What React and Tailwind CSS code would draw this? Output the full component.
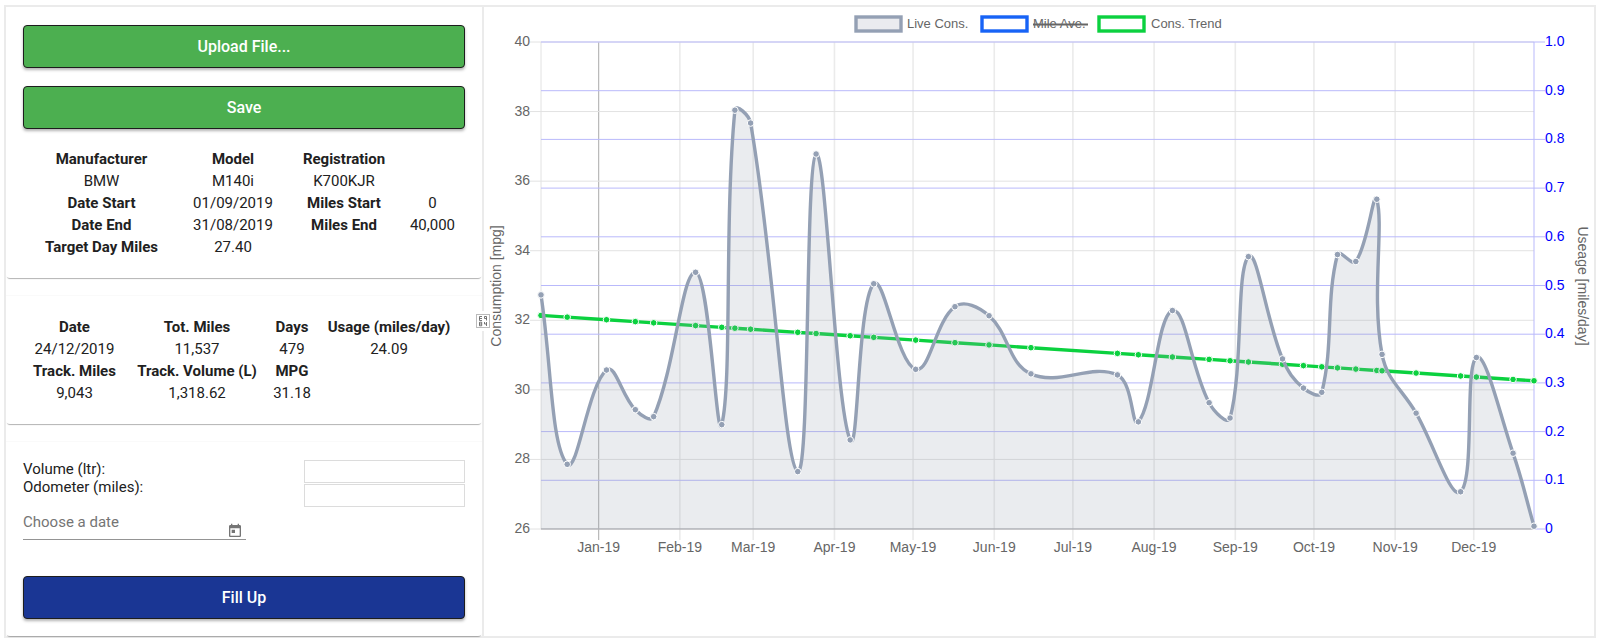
const fills = [
  [0, 32.73], [10, 27.86], [25, 30.57], [36, 29.43], [43, 29.23], [59, 33.38],
  [69, 29.0], [74, 38.04], [80, 37.67], [98, 27.65], [105, 36.78], [118, 28.56],
  [127, 33.05], [143, 30.59], [158, 32.39], [171, 32.13], [187, 30.46], [220, 30.43],
  [228, 29.08], [241, 32.28], [255, 29.63], [263, 29.19], [270, 33.83], [283, 30.89],
  [291, 30.05], [298, 29.93], [304, 33.89], [311, 33.69], [319, 35.48], [321, 31.02],
  [334, 29.33], [351, 27.07], [357, 30.93], [371, 28.18], [379, 26.08],
]

const months = [
  ['Jan-19', 22], ['Feb-19', 53], ['Mar-19', 81], ['Apr-19', 112], ['May-19', 142], ['Jun-19', 173],
  ['Jul-19', 203], ['Aug-19', 234], ['Sep-19', 265], ['Oct-19', 295], ['Nov-19', 326], ['Dec-19', 356],
]

const LEFT = 57
const RIGHT = 1050
const TOP = 35
const BOTTOM = 522
const DAYS = 379

const xFor = (day) => LEFT + (day / DAYS) * (RIGHT - LEFT)
const yFor = (mpg) => BOTTOM - ((mpg - 26) / 14) * (BOTTOM - TOP)
const clampY = (y) => Math.min(BOTTOM, Math.max(TOP, y))

const points = fills.map(([day, mpg]) => ({ x: xFor(day), y: yFor(mpg) }))
const trend = fills.map(([day]) => ({ x: xFor(day), y: yFor(32.14 - (day / DAYS) * 1.88) }))

// tension 0.4 spline, control points weighted by the distance to each neighbour
function spline(pts) {
  const controls = pts.map((p, i) => {
    const prev = pts[i - 1] || p
    const next = pts[i + 1] || p
    const d01 = Math.hypot(p.x - prev.x, p.y - prev.y)
    const d12 = Math.hypot(next.x - p.x, next.y - p.y)
    const fa = (0.4 * d01) / (d01 + d12)
    const fb = (0.4 * d12) / (d01 + d12)
    const dx = next.x - prev.x
    const dy = next.y - prev.y
    return {
      before: [p.x - fa * dx, clampY(p.y - fa * dy)],
      after: [p.x + fb * dx, clampY(p.y + fb * dy)],
    }
  })
  return pts
    .map((p, i) => (i === 0 ? `M${p.x},${p.y}` : `C${controls[i - 1].after} ${controls[i].before} ${p.x},${p.y}`))
    .join(' ')
}

const line = spline(points)
const area = `${line} L${RIGHT},${BOTTOM} L${LEFT},${BOTTOM} Z`
const trendLine = `M${trend.map((p) => `${p.x},${p.y}`).join(' L')}`

function Chart() {
  return (
    <svg viewBox="0 0 1110 560" className="block w-full font-['Liberation_Sans',Arial,sans-serif] text-[14px]" role="img" aria-label="Fuel consumption">
      <g strokeWidth="3.4" className="text-[13px]">
        <rect x="372" y="10" width="45" height="14" fill="#eaebef" stroke="#94a0b4" />
        <rect x="498" y="10" width="45" height="14" fill="#fff" stroke="#1763f6" />
        <rect x="615" y="10" width="45" height="14" fill="#fff" stroke="#0bd13f" />
        <g fill="#666" stroke="none">
          <text x="423" y="21">Live Cons.</text>
          <text x="549" y="21">Mile Ave.</text>
          <text x="667" y="21">Cons. Trend</text>
        </g>
        <path d="M549 17.5H604" stroke="#666" strokeWidth="2" />
      </g>

      <g fill="#666" textAnchor="middle">
        {months.map(([label, day]) => (
          <g key={label}>
            <path d={`M${xFor(day)} ${TOP}V${BOTTOM + 11}`} stroke={day === 22 ? '#b8b8b8' : '#ebebeb'} strokeWidth={day === 22 ? 1.2 : 1.6} />
            <text x={xFor(day)} y="545">{label}</text>
          </g>
        ))}
      </g>
      <path d={`M${LEFT} ${TOP}V${BOTTOM}`} stroke="#e2e2e2" />

      <g fill="#666" textAnchor="end">
        {[40, 38, 36, 34, 32, 30, 28, 26].map((mpg) => (
          <g key={mpg}>
            <path d={`M${LEFT - 11} ${yFor(mpg)}H${mpg === 26 ? LEFT : RIGHT}`} stroke="#e2e2e2" />
            <text x={LEFT - 11} y={yFor(mpg) + 4}>{mpg}</text>
          </g>
        ))}
      </g>

      <g fill="#00f">
        {[0, 1, 2, 3, 4, 5, 6, 7, 8, 9, 10].map((n) => {
          const y = BOTTOM - (n / 10) * (BOTTOM - TOP)
          return (
            <g key={n}>
              <path d={`M${n === 0 ? RIGHT : LEFT} ${y}H${RIGHT + 11}`} stroke="#b9b9fb" />
              <text x={RIGHT + 11} y={y + 4}>{n === 0 ? '0' : (n / 10).toFixed(1)}</text>
            </g>
          )
        })}
        <path d={`M${RIGHT} ${TOP}V${BOTTOM}`} stroke="#b9b9fb" />
      </g>

      <path d={`M${LEFT} ${BOTTOM}H${RIGHT}`} stroke="#b4b4b8" strokeWidth="1.5" />

      <path d={trendLine} fill="none" stroke="#0bd13f" strokeWidth="3.4" />
      {trend.map((p, i) => (
        <circle key={i} cx={p.x} cy={p.y} r="3.3" fill="#0bd13f" stroke="#fff" />
      ))}
      <path d={area} fill="#949fb1" fillOpacity="0.2" />
      <path d={line} fill="none" stroke="#94a0b4" strokeWidth="3.4" strokeLinejoin="round" />
      {points.map((p, i) => (
        <circle key={i} cx={p.x} cy={p.y} r="3.3" fill="#94a0b4" stroke="#fff" />
      ))}

      <g fill="#666" textAnchor="middle">
        <text transform="translate(17 279) rotate(-90)">Consumption [mpg]</text>
        <text transform="translate(1094 279) rotate(90)">Useage [miles/day]</text>
      </g>
    </svg>
  )
}

function Card({ className, children }) {
  return (
    <section className={`rounded-b-[4px] px-[17px] shadow-[0_2px_1px_-1px_rgba(0,0,0,0.3)] ${className}`}>{children}</section>
  )
}

function BigButton({ className, children }) {
  return (
    <button
      type="button"
      className={`block h-[43px] w-full rounded-[4px] border border-[#1d1d1d] text-base font-medium text-white shadow-[0_2px_3px_rgba(0,0,0,0.3)] ${className}`}
    >
      {children}
    </button>
  )
}

function SplitHandle() {
  return (
    <div className="absolute top-[304px] -right-2 bg-white py-[3px]" role="separator" aria-orientation="vertical">
      <svg viewBox="0 0 14 14" className="h-[14px] w-[14px]" fill="none" stroke="#555">
        <rect x="0.5" y="0.5" width="13" height="13" stroke="#bbb" />
        <path d="M6 2.5H3.5V6.5H6M3.5 4.5H6M10.5 6.5V2.5H8.5V4.5H10.5M3.5 8.2H5.7V11.8H3.5ZM3.5 10H5.7M8.5 8V10H10.5M10.5 8V12" strokeWidth="0.8" />
      </svg>
    </div>
  )
}

export default function App() {
  return (
    <main className="px-1 pt-[5px] pb-1 font-[Roboto,sans-serif] text-[15px] text-[#212121]">
      <div className="flex border-2 border-[#ebebeb]">
        <div className="relative w-[478px] shrink-0 border-r-2 border-[#ebebeb]">
          <Card className="pt-[18px] pb-5">
            <BigButton className="bg-[#4caf50]">Upload File...</BigButton>
            <BigButton className="mt-[18px] bg-[#4caf50]">Save</BigButton>
            <table className="mt-[19px] ml-[5px] w-[440px] table-fixed text-center leading-[22px]">
              <tbody>
                <tr>
                  <th className="w-[147px]">Manufacturer</th>
                  <th className="w-[116px]">Model</th>
                  <th className="w-[106px]">Registration</th>
                  <td />
                </tr>
                <tr><td>BMW</td><td>M140i</td><td>K700KJR</td><td /></tr>
                <tr><th>Date Start</th><td>01/09/2019</td><th>Miles Start</th><td>0</td></tr>
                <tr><th>Date End</th><td>31/08/2019</td><th>Miles End</th><td>40,000</td></tr>
                <tr><th>Target Day Miles</th><td>27.40</td><td /><td /></tr>
              </tbody>
            </table>
          </Card>

          <Card className="mt-[17px] border-t border-[#fafafa] pt-5 pb-5">
            <table className="text-center leading-[22px]">
              <tbody>
                <tr>
                  <th className="w-[103px]">Date</th>
                  <th className="w-[142px]">Tot. Miles</th>
                  <th className="w-[48px]">Days</th>
                  <th className="w-[146px]">Usage (miles/day)</th>
                </tr>
                <tr><td>24/12/2019</td><td>11,537</td><td>479</td><td>24.09</td></tr>
                <tr><th>Track. Miles</th><th>Track. Volume (L)</th><th>MPG</th><td /></tr>
                <tr><td>9,043</td><td>1,318.62</td><td>31.18</td><td /></tr>
              </tbody>
            </table>
          </Card>

          <Card className="mt-[17px] border-t border-[#fafafa] pt-[18px] pb-[17px]">
            <div className="flex justify-between">
              <div className="flex flex-col leading-[18px]">
                <label htmlFor="volume">Volume (ltr):</label>
                <label htmlFor="odometer">Odometer (miles):</label>
              </div>
              <div className="flex w-[161px] flex-col gap-px">
                <input id="volume" className="h-[23px] border border-[#dcdcdc] px-1" />
                <input id="odometer" className="h-[23px] border border-[#dcdcdc] px-1" />
              </div>
            </div>
            <div className="mt-1 flex h-[29px] w-[223px] items-start border-b border-[#949494]">
              <input aria-label="Choose a date" placeholder="Choose a date" className="min-w-0 flex-1 leading-[22px] outline-none placeholder:text-[#757575]" />
              <button type="button" aria-label="Open calendar" className="mt-3 mr-[3px]">
                <svg viewBox="0 0 24 24" className="h-4 w-4" fill="#757575">
                  <path d="M19 3h-1V1h-2v2H8V1H6v2H5c-1.11 0-1.99.9-1.99 2L3 19c0 1.1.89 2 2 2h14c1.1 0 2-.9 2-2V5c0-1.1-.9-2-2-2zm0 16H5V8h14v11zM7 10h5v5H7z" />
                </svg>
              </button>
            </div>
            <BigButton className="mt-9 bg-[#1a3694]">Fill Up</BigButton>
          </Card>
          <SplitHandle />
        </div>
        <div className="min-w-0 flex-1">
          <Chart />
        </div>
      </div>
    </main>
  )
}
